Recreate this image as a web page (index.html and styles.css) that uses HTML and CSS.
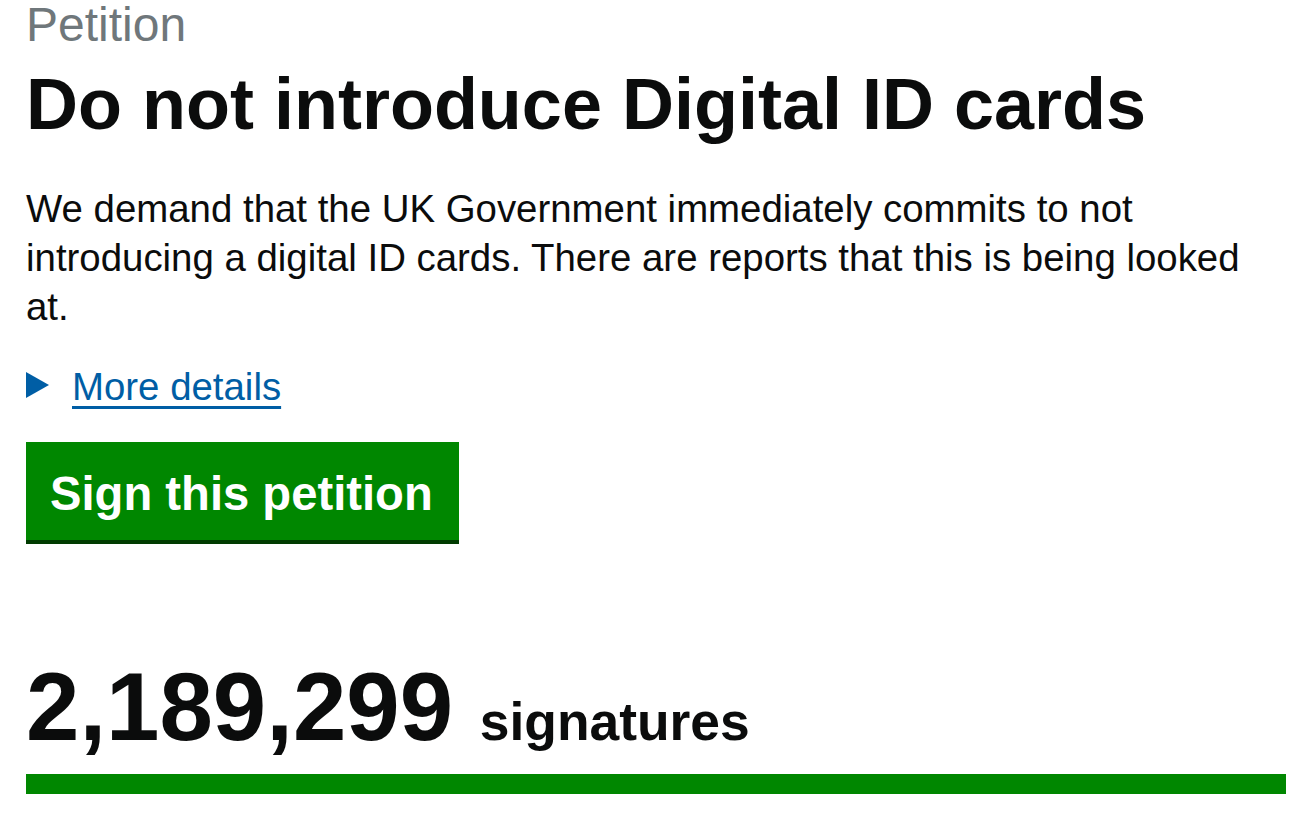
FILE: index.html
```html
<!DOCTYPE html>
<html lang="en">
<head>
<meta charset="utf-8">
<title>Do not introduce Digital ID cards - Petitions</title>
<link rel="stylesheet" href="styles.css">
</head>
<body>
<main class="page">
  <span class="caption">Petition</span>
  <h1 class="title">Do not introduce Digital ID cards</h1>
  <p class="summary">We demand that the UK Government immediately commits to not introducing a digital ID cards. There are reports that this is being looked at.</p>
  <details class="more">
    <summary class="more-summary">
      <svg class="more-arrow" width="23" height="26" viewBox="0 0 23 26" aria-hidden="true"><polygon points="0,0 23,13 0,26" /></svg>
      <span class="more-link">More details</span>
    </summary>
  </details>
  <a class="button" href="#">Sign this petition</a>
  <div class="count"><span class="count-num">2,189,299</span> <span class="count-label">signatures</span></div>
  <div class="progress"><div class="progress-bar" style="width: 100%"></div></div>
</main>
</body>
</html>
```

FILE: styles.css
```css
html, body {
  margin: 0;
  padding: 0;
  background: #ffffff;
}

body {
  font-family: "Liberation Sans", Arial, Helvetica, sans-serif;
  color: #0b0c0c;
}

.page {
  display: flex;
  flex-direction: column;
  align-items: flex-start;
  padding: 0 26px;
}

.caption {
  display: block;
  font-size: 48px;
  line-height: 50px;
  color: #6f777b;
}

.title {
  margin: 14px 0 0;
  font-size: 72px;
  line-height: 80px;
  font-weight: 700;
}

.summary {
  margin: 40px 0 0;
  font-size: 38.4px;
  line-height: 49px;
  width: 100%;
}

.more {
  margin-top: 31px;
}

.more-summary {
  display: flex;
  align-items: center;
  list-style: none;
  cursor: pointer;
  font-size: 38.4px;
  line-height: 49px;
}

.more-summary::-webkit-details-marker {
  display: none;
}

.more-arrow {
  fill: #005ea5;
  margin-right: 23px;
  margin-top: -3px;
  flex: none;
}

.more-link {
  color: #005ea5;
  text-decoration: underline;
  text-decoration-thickness: 3px;
  text-underline-offset: 6px;
}

.button {
  margin-top: 31px;
  display: block;
  background: #008700;
  color: #ffffff;
  font-size: 47.2px;
  line-height: 60px;
  font-weight: 700;
  padding: 22px 26px 16px 24px;
  text-decoration: none;
  box-shadow: 0 4px 0 #003b00;
}

.count {
  margin-top: 117px;
  font-size: 96px;
  line-height: 100px;
  font-weight: 700;
}

.count-label {
  font-size: 53.4px;
  line-height: 1;
}

.progress {
  margin-top: 17px;
  width: 100%;
  height: 20px;
}

.progress-bar {
  height: 20px;
  background: #008700;
}
```
